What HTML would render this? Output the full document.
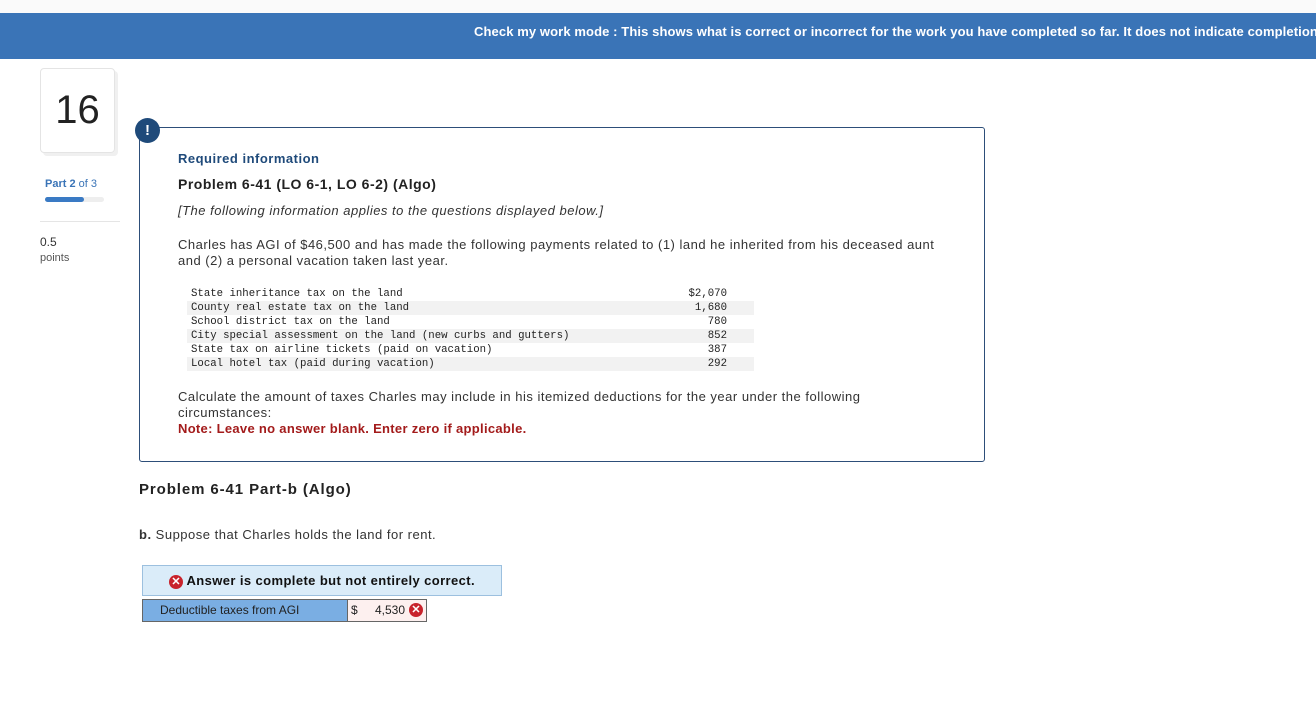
<!DOCTYPE html>
<html><head><meta charset="utf-8"><style>
body{margin:0;width:1316px;height:725px;background:#fff;font-family:"Liberation Sans",Arial,sans-serif;color:#333;position:relative;overflow:hidden}
.top{position:absolute;left:0;top:0;width:1316px;height:13px;background:#fafafa}
.bar{position:absolute;left:0;top:13px;width:1316px;height:46px;background:#3a74b7;color:#fff;font-weight:bold;font-size:13px;white-space:nowrap;overflow:hidden}
.bar span{position:absolute;left:474px;top:11px;letter-spacing:0.1px}
.a{position:absolute;white-space:nowrap}
.t{letter-spacing:0.5px}
.card{position:absolute;left:40px;top:68px;width:73px;height:83px;border:1px solid #e4e4e4;border-radius:4px;box-shadow:3px 3px 0 #f0f0f0;font-size:40px;text-align:center;line-height:83px;color:#222}
.box{position:absolute;left:139px;top:127px;width:844px;height:333px;border:1px solid #2d4e79;border-radius:3px}
.ex{position:absolute;left:135px;top:118px;width:25px;height:25px;border-radius:50%;background:#1f4a7a;color:#fff;font-weight:bold;font-size:15px;text-align:center;line-height:25px}
.mono{font-family:"Liberation Mono",monospace;font-size:10.7px;color:#222}
.row{position:absolute;left:187px;width:567px;height:14px;line-height:14px}
.row.s{background:#f2f2f2}
.row b{font-weight:normal;position:absolute;left:4px}
.row i{font-style:normal;position:absolute;right:27px}
.xc{display:inline-block;width:14px;height:14px;border-radius:50%;background:#c8232c;color:#fff;font-size:11px;line-height:14px;text-align:center;font-weight:bold;vertical-align:middle;letter-spacing:0}
</style></head><body>
<div class="top"></div>
<div class="bar"><span>Check my work mode : This shows what is correct or incorrect for the work you have completed so far. It does not indicate completion.</span></div>
<div class="card">16</div>
<div class="a" style="left:45px;top:178px;font-size:11px;color:#3a74b7"><b>Part 2</b> of 3</div>
<div class="a" style="left:45px;top:197px;width:59px;height:5px;background:#eee;border-radius:3px"><div style="width:39px;height:5px;background:#3a7ac4;border-radius:3px"></div></div>
<div class="a" style="left:40px;top:221px;width:80px;height:1px;background:#e5e5e5"></div>
<div class="a" style="left:40px;top:235px;font-size:12px;color:#333">0.5</div>
<div class="a" style="left:40px;top:252px;font-size:11px;color:#555">points</div>
<div class="box"></div>
<div class="ex">!</div>
<div class="a t" style="left:178px;top:151px;font-size:13px;font-weight:bold;color:#1f4a7a">Required information</div>
<div class="a t" style="left:178px;top:176px;font-size:14px;font-weight:bold;color:#222">Problem 6-41 (LO 6-1, LO 6-2) (Algo)</div>
<div class="a t" style="left:178px;top:203px;font-size:13px;font-style:italic;color:#333">[The following information applies to the questions displayed below.]</div>
<div class="a t" style="left:178px;top:237px;font-size:13px;line-height:16px;color:#333">Charles has AGI of $46,500 and has made the following payments related to (1) land he inherited from his deceased aunt<br>and (2) a personal vacation taken last year.</div>
<div class="mono">
<div class="row" style="top:287px"><b>State inheritance tax on the land</b><i>$2,070</i></div>
<div class="row s" style="top:301px"><b>County real estate tax on the land</b><i>1,680</i></div>
<div class="row" style="top:315px"><b>School district tax on the land</b><i>780</i></div>
<div class="row s" style="top:329px"><b>City special assessment on the land (new curbs and gutters)</b><i>852</i></div>
<div class="row" style="top:343px"><b>State tax on airline tickets (paid on vacation)</b><i>387</i></div>
<div class="row s" style="top:357px"><b>Local hotel tax (paid during vacation)</b><i>292</i></div>
</div>
<div class="a t" style="left:178px;top:389px;font-size:13px;line-height:16px;color:#333">Calculate the amount of taxes Charles may include in his itemized deductions for the year under the following<br>circumstances:<br><b style="color:#a31b1b;letter-spacing:0.3px">Note: Leave no answer blank. Enter zero if applicable.</b></div>
<div class="a t" style="left:139px;top:481px;font-size:15px;font-weight:bold;color:#222;letter-spacing:0.9px">Problem 6-41 Part-b (Algo)</div>
<div class="a t" style="left:139px;top:527px;font-size:13px;color:#333"><b>b.</b> Suppose that Charles holds the land for rent.</div>
<div class="a" style="left:142px;top:565px;width:358px;height:29px;background:#daecf9;border:1px solid #9cc0df;text-align:center;line-height:29px;font-size:13px;font-weight:bold;color:#111;letter-spacing:0.4px"><span class="xc">✕</span> Answer is complete but not entirely correct.</div>
<div class="a" style="left:142px;top:599px;width:205px;height:21px;background:#7aaee3;border:1px solid #666;font-size:12px;line-height:21px;color:#222"><span style="margin-left:17px">Deductible taxes from AGI</span></div>
<div class="a" style="left:347px;top:599px;width:78px;height:21px;background:#fdf0ef;border:1px solid #666;font-size:12px;line-height:21px;color:#222"><span style="position:absolute;left:3px">$</span><span style="position:absolute;right:21px">4,530</span><span class="xc" style="position:absolute;right:3px;top:3px">✕</span></div>
</body></html>
